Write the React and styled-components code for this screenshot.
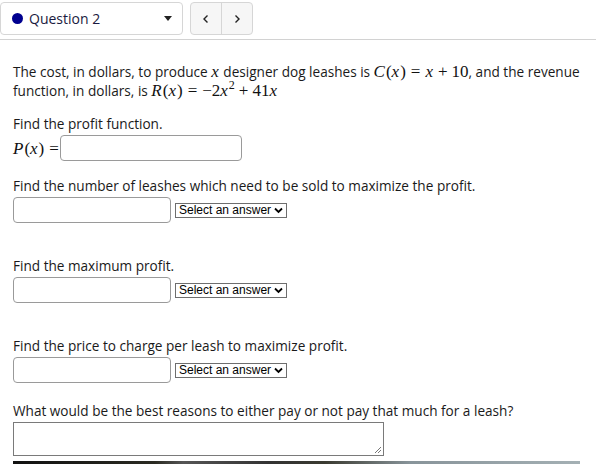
import React from "react"
import styled, { createGlobalStyle } from "styled-components"

const Global = createGlobalStyle`
  body {
    margin: 0;
    background: #fff;
    font-family: "Open Sans", sans-serif;
    color: #1a1a1a;
  }
`

const Page = styled.div`
  width: 596px;
  height: 464px;
  overflow: hidden;
  position: relative;
`

const Header = styled.div`
  display: flex;
  align-items: flex-start;
  gap: 7px;
  padding-top: 2px;
  height: 37px;
  border-bottom: 1px solid #d2d2d2;
  margin-bottom: 22px;
`

const QuestionSelect = styled.div`
  width: 183px;
  height: 33px;
  box-sizing: border-box;
  border: 1px solid #d6d6d6;
  border-radius: 4px;
  display: flex;
  align-items: center;
  padding: 0 10px 0 11px;
  font-size: 14px;
  color: #1a1a40;
`

const Dot = styled.span`
  width: 11px;
  height: 11px;
  border-radius: 50%;
  background: #00008f;
  margin-right: 6px;
`

const Caret = styled.span`
  margin-left: auto;
  width: 0;
  height: 0;
  border-left: 4px solid transparent;
  border-right: 4px solid transparent;
  border-top: 5px solid #222;
`

const NavGroup = styled.div`
  display: flex;
  height: 33px;
  box-sizing: border-box;
  border: 1px solid #d6d6d6;
  border-radius: 4px;
  background: #f6f6f6;
  overflow: hidden;
`

const NavButton = styled.div`
  width: 30px;
  display: flex;
  align-items: center;
  justify-content: center;
  border-left: ${(p) => (p.$divider ? "1px solid #d6d6d6" : "none")};
`

const Body = styled.div`
  padding: 0 13px;
  font-size: 13.6px;
  line-height: 19px;
`

const Para = styled.p`
  margin: 0 0 ${(p) => p.$gap ?? 0}px;
`

const Math = styled.span`
  font-family: "Liberation Serif", "Times New Roman", serif;
  font-size: 17px;
  line-height: 19px;
  white-space: nowrap;
  color: #111;

  i {
    font-style: italic;
    padding-right: 1px;
  }

  sup {
    font-size: 12px;
    line-height: 0;
  }
`

const Op = styled.span`
  padding: 0 ${(p) => (p.$rel ? 5 : 4)}px;
`

const Row = styled.div`
  display: flex;
  align-items: center;
  gap: 1px;
  margin-top: 2px;
  margin-bottom: ${(p) => p.$mb || 0}px;
`

const Input = styled.div`
  width: ${(p) => p.$w || 158}px;
  height: 26px;
  box-sizing: border-box;
  border: 1px solid #9a9a9a;
  border-radius: 4px;
  background: #fff;
  margin-right: 3px;
`

const Select = styled.div`
  display: flex;
  align-items: center;
  gap: 3px;
  height: 15px;
  box-sizing: border-box;
  border: 1px solid #6e6e6e;
  padding: 0 3px;
  font-family: "Liberation Sans", Arial, sans-serif;
  font-size: 12px;
  line-height: 13px;
  color: #000;
  margin-top: 1px;
`

const Textarea = styled.div`
  width: 371px;
  height: 34px;
  box-sizing: border-box;
  border: 1px solid #7a7a7a;
  margin-top: 2px;
  position: relative;
`

const Grip = styled.svg`
  position: absolute;
  right: 1px;
  bottom: 1px;
`

const Strip = styled.div`
  position: absolute;
  left: 13px;
  right: 16px;
  bottom: 0;
  height: 3px;
  background: linear-gradient(90deg, #111 0%, #2a2a22 25%, #555 30%, #333 45%, #3a3a30 55%, #88949a 70%, #a4b0b4 100%);
`

const Chevron = () => (
  <svg width="9" height="7" viewBox="0 0 9 7">
    <path d="M1 1.5 L4.5 5 L8 1.5" fill="none" stroke="#000" strokeWidth="1.8" />
  </svg>
)

const AnswerRow = ({ mb }) => (
  <Row $mb={mb}>
    <Input />
    <Select>
      Select an answer <Chevron />
    </Select>
  </Row>
)

export default function App() {
  return (
    <Page>
      <Global />
      <Header>
        <QuestionSelect>
          <Dot />
          Question 2
          <Caret />
        </QuestionSelect>
        <NavGroup>
          <NavButton>
            <svg width="8" height="10" viewBox="0 0 8 10">
              <path d="M5.5 1.5 L2 5 L5.5 8.5" fill="none" stroke="#222" strokeWidth="1.4" />
            </svg>
          </NavButton>
          <NavButton $divider>
            <svg width="8" height="10" viewBox="0 0 8 10">
              <path d="M2.5 1.5 L6 5 L2.5 8.5" fill="none" stroke="#222" strokeWidth="1.4" />
            </svg>
          </NavButton>
        </NavGroup>
      </Header>
      <Body>
        <Para $gap={14}>
          The cost, in dollars, to produce <Math><i>x</i></Math> designer dog leashes is{" "}
          <Math><i>C</i>(<i>x</i>)<Op $rel>=</Op><i>x</i><Op>+</Op>10</Math>, and the revenue function, in dollars, is{" "}
          <Math><i>R</i>(<i>x</i>)<Op $rel>=</Op>−2<i>x</i><sup>2</sup><Op>+</Op>41<i>x</i></Math>
        </Para>
        <Para>Find the profit function.</Para>
        <Row $mb={15}>
          <Math><i>P</i>(<i>x</i>)<Op $rel>=</Op></Math>
          <Input $w={182} style={{ marginLeft: -5 }} />
        </Row>
        <Para>Find the number of leashes which need to be sold to maximize the profit.</Para>
        <AnswerRow mb={33} />
        <Para>Find the maximum profit.</Para>
        <AnswerRow mb={33} />
        <Para>Find the price to charge per leash to maximize profit.</Para>
        <AnswerRow mb={18} />
        <Para>What would be the best reasons to either pay or not pay that much for a leash?</Para>
        <Textarea>
          <Grip width="9" height="9" viewBox="0 0 9 9">
            <path d="M8 2 L2 8 M8 5 L5 8" stroke="#777" strokeWidth="1" />
          </Grip>
        </Textarea>
      </Body>
      <Strip />
    </Page>
  )
}
